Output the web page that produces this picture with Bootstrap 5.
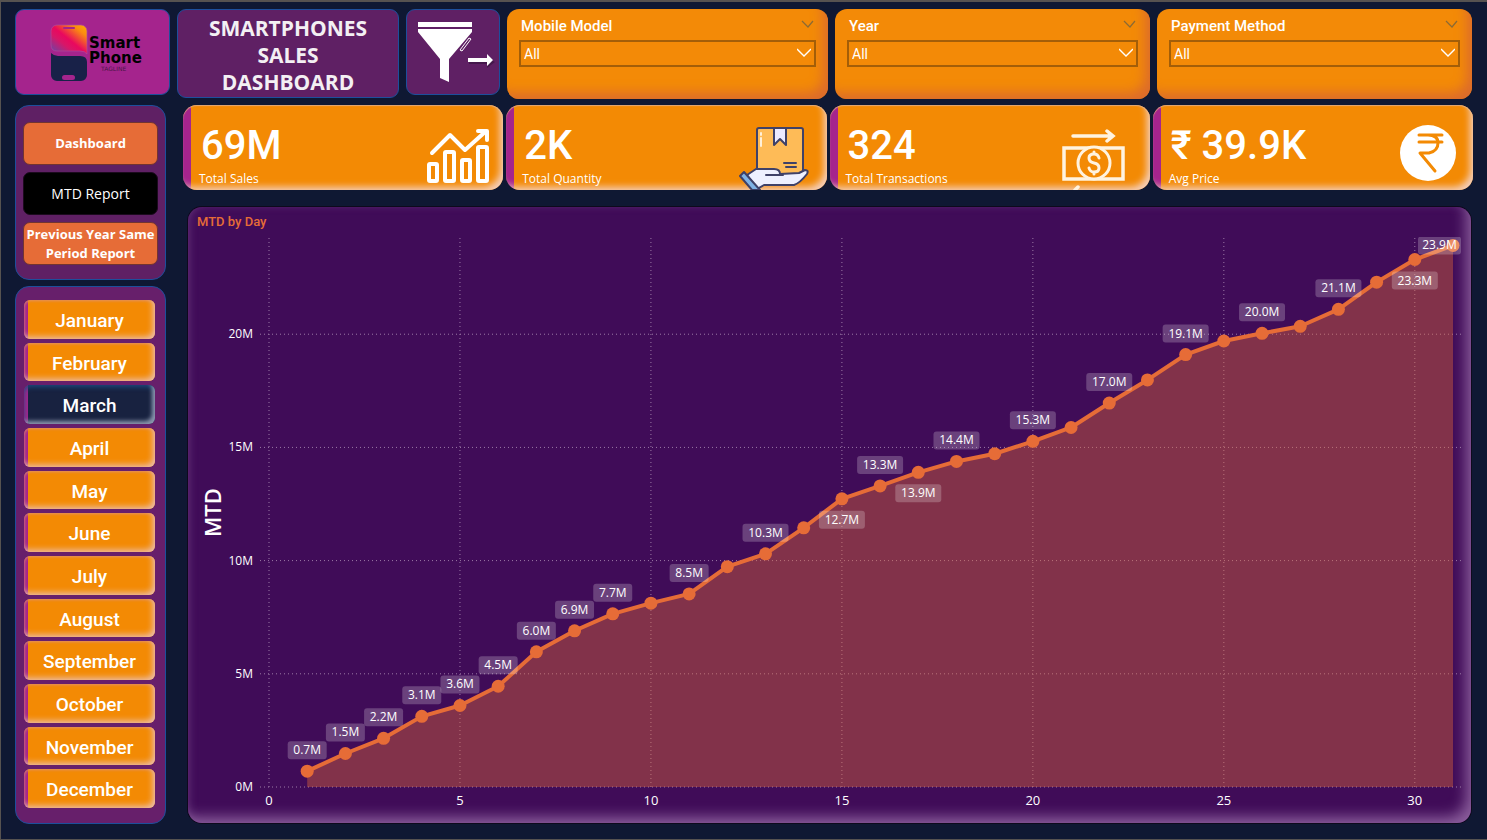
<!DOCTYPE html>
<html lang="en">
<head>
<meta charset="utf-8">
<meta name="viewport" content="width=device-width, initial-scale=1">
<title>Smartphones Sales Dashboard</title>
<link href="https://cdn.jsdelivr.net/npm/bootstrap@5.3.0/dist/css/bootstrap.min.css" rel="stylesheet">
<style>
  :root { --din: Roboto, "Liberation Sans", sans-serif; --segoe: "Open Sans", "Noto Sans", sans-serif; }
  body { background: #0f1833; color: #fff; font-family: var(--segoe); }
  .page { border: 1px solid #565250; border-top-width: 2px; border-right: 0; padding: 7px 14px 15px; }
  .topbar { display: grid; grid-template-columns: 155px 222px 94px 321fr 315fr 315fr; gap: 7px; height: 89px; align-items: start; padding-right: 1px; margin-bottom: 7px; }
  .tile { border: 1px solid #1d4f9c; border-radius: 9px; background: #5f2064; height: 86px; }
  .tile-logo { background: #a5248d; }
  .tile-title { height: 89px; font-size: 21px; line-height: 27px; font-weight: 700; color: #f3f0f3; padding-top: 3px; }
  .slicer { height: 90px; border-radius: 12px; background: #f38a07; box-shadow: inset -9px -10px 12px -4px #dc6b2c; padding: 7px 12px 0 12px; font-family: var(--din); }
  .slicer label { font-size: 15px; line-height: 20px; font-weight: 500; padding-left: 2px; }
  .slicer select { appearance: none; width: 100%; height: 27px; border: 2px solid #a35e08; background: transparent; color: #fff; font-size: 14px; line-height: 20px; padding: 0 4px 0 3px; border-radius: 0; }
  .slicer option { color: #222; }
  .slicer .box-arrow { right: 5px; top: 8px; pointer-events: none; }
  .layout { display: grid; grid-template-columns: 151px minmax(0, 1fr); gap: 17px; }
  .side-panel { border: 1px solid #1d4f9c; border-radius: 14px; background: #5f2064; }
  .side-nav { height: 175px; padding: 16px 7px 14px; gap: 7px; margin-bottom: 6px; }
  .side-nav a { flex: 1 1 0; border: 1px solid #713431; border-radius: 7px; background: #e66c37; color: #fff; font-size: 13px; line-height: 19px; font-weight: 700; text-decoration: none; white-space: nowrap; }
  .side-nav a.current { background: #000; border-color: #1c0a1e; font-size: 14px; font-weight: 400; }
  .months { background: #671f6b; padding: 13px 10px 15px 8px; gap: 4px; }
  .month { flex: 1 1 0; min-height: 32px; border: 0; border-radius: 6px; color: #fff; font: 500 19px/24px var(--din); background: linear-gradient(90deg, #a5248d 4px, #f38a04 4px); box-shadow: inset -3px -3px 6px -1px #ecc0b0, inset 0 1px 3px #e28a55; padding: 3px 0 0; }
  .month.chosen { background: linear-gradient(90deg, #a5248d 4px, #182240 4px); box-shadow: inset -4px -4px 4px -1px #8c96ad, inset 0 2px 5px #1b4b80; }
  .kpis { display: grid; grid-template-columns: repeat(4, minmax(0, 1fr)); gap: 3px; margin-bottom: 17px; }
  .kpi { height: 85px; border-radius: 14px; overflow: hidden; background: linear-gradient(90deg, #a5248d 8px, #f38a04 8px); box-shadow: inset -6px -6px 7px -3px #f5cfbb, inset 0 1px 1px #e0a878; padding: 18px 12px 0 16px; }
  .kpi-value { font: 500 40px/46px var(--din); padding-left: 2px; }
  .kpi-label { font-size: 12px; line-height: 20px; }
  .kpi svg { align-self: flex-end; flex: none; }
  .chart-panel { margin: 0 2px 1px 5px; min-height: 500px; border-radius: 14px; background: #400c58; box-shadow: inset -10px -11px 14px -5px #8a5d9b, inset 3px 0 10px -3px #6b3a80, 0 0 0 1px #0d0a1c; }
  .chart-title { font: 500 13px/30px var(--din); color: #e66c37; margin: 0; padding-left: 9px; }
  #chart { flex: 1 1 0; min-height: 0; width: 100%; display: block; }
  #chart text { fill: #fff; font-size: 12px; }
  #chart .axis-title { font-size: 22px; font-weight: 600; }
  #chart .x-tick { font-size: 13px; }
  .gridline { stroke: #9b7aa6; stroke-dasharray: 1 3; }
</style>
</head>
<body>
<div class="page min-vh-100 d-flex flex-column">
  <header class="topbar">
    <div class="tile tile-logo d-flex align-items-center justify-content-center">
      <svg width="153" height="84" role="img" aria-label="Smart Phone">
        <defs><linearGradient id="sunset" x1="1" y1="0" x2="0" y2="1"><stop offset="0" stop-color="#ffb000"/><stop offset=".2" stop-color="#fb8b10"/><stop offset=".5" stop-color="#e9085e"/><stop offset=".65" stop-color="#d81668"/><stop offset="1" stop-color="#5a4bb0"/></linearGradient></defs>
        <path d="M41 15h24a6 6 0 0 1 6 6v23q-2-3-7-3H41q-6 0-6-6V21a6 6 0 0 1 6-6z" fill="url(#sunset)" stroke="#b04a9c" stroke-width=".7"/>
        <rect x="47" y="17" width="12" height="2" rx="1" fill="#a5248d"/>
        <path d="M35 43q3 3 7 3h22q7 0 7 6v13a6 6 0 0 1-6 6H41a6 6 0 0 1-6-6z" fill="#182148"/>
        <rect x="46" y="65" width="13" height="5" rx="2.5" fill="#a5248d"/>
        <text x="73" y="38" font-family="DejaVu Sans" font-weight="700" font-size="15">Smart</text>
        <text x="73" y="53" font-family="DejaVu Sans" font-weight="700" font-size="15">Phone</text>
        <text x="85" y="61" font-family="DejaVu Sans" font-size="6" fill="#4b1748">TAGLINE</text>
      </svg>
    </div>
    <h1 class="tile tile-title m-0 d-flex align-items-center justify-content-center text-center">SMARTPHONES<br>SALES<br>DASHBOARD</h1>
    <button class="tile p-0" type="button" aria-label="Filters">
      <svg width="92" height="84" fill="#fff">
        <path d="M11 12h54v5H11zM11 19h54v3L42 49v23l-9-4V49L11 22z"/>
        <path d="M62 28l2 1-9 12-2-1z" fill="#5f2064" stroke="#fff"/>
        <path d="M62 51h18v-3l8 4-8 6v-4H62z" fill="#2b1033" opacity=".5"/>
        <path d="M61 48h19v-4l6 6-6 6v-4H61z"/>
      </svg>
    </button>
    <div class="slicer">
      <div class="d-flex justify-content-between"><label for="model">Mobile Model</label><svg width="16" height="16" fill="none" stroke="#8a6a35" stroke-width="1.2"><path d="M2 5l6 6 5-6"/></svg></div>
      <div class="position-relative mt-1"><select id="model"><option>All</option></select><svg class="box-arrow position-absolute" width="14" height="10" fill="none" stroke="#fff" stroke-width="1.4"><path d="M0 1l7 7 7-7"/></svg></div>
    </div>
    <div class="slicer">
      <div class="d-flex justify-content-between"><label for="year">Year</label><svg width="16" height="16" fill="none" stroke="#8a6a35" stroke-width="1.2"><path d="M2 5l6 6 5-6"/></svg></div>
      <div class="position-relative mt-1"><select id="year"><option>All</option></select><svg class="box-arrow position-absolute" width="14" height="10" fill="none" stroke="#fff" stroke-width="1.4"><path d="M0 1l7 7 7-7"/></svg></div>
    </div>
    <div class="slicer">
      <div class="d-flex justify-content-between"><label for="payment">Payment Method</label><svg width="16" height="16" fill="none" stroke="#8a6a35" stroke-width="1.2"><path d="M2 5l6 6 5-6"/></svg></div>
      <div class="position-relative mt-1"><select id="payment"><option>All</option></select><svg class="box-arrow position-absolute" width="14" height="10" fill="none" stroke="#fff" stroke-width="1.4"><path d="M0 1l7 7 7-7"/></svg></div>
    </div>
  </header>

  <div class="layout flex-grow-1">
    <aside class="d-flex flex-column">
      <nav class="side-panel side-nav d-flex flex-column">
        <a href="#" class="d-flex align-items-center justify-content-center text-center">Dashboard</a>
        <a href="#" class="current d-flex align-items-center justify-content-center text-center">MTD Report</a>
        <a href="#" class="d-flex align-items-center justify-content-center text-center">Previous Year Same<br>Period Report</a>
      </nav>
      <div class="side-panel months d-flex flex-column flex-grow-1">
        <button type="button" class="month">January</button>
        <button type="button" class="month">February</button>
        <button type="button" class="month chosen">March</button>
        <button type="button" class="month">April</button>
        <button type="button" class="month">May</button>
        <button type="button" class="month">June</button>
        <button type="button" class="month">July</button>
        <button type="button" class="month">August</button>
        <button type="button" class="month">September</button>
        <button type="button" class="month">October</button>
        <button type="button" class="month">November</button>
        <button type="button" class="month">December</button>
      </div>
    </aside>

    <main class="d-flex flex-column">
      <section class="kpis">
        <div class="kpi d-flex justify-content-between">
          <div><div class="kpi-value">69M</div><div class="kpi-label">Total Sales</div></div>
          <svg width="80" height="68" fill="none" stroke="#fff" stroke-width="4" stroke-linecap="round" stroke-linejoin="round">
            <rect x="18" y="42" width="8" height="17" rx="1"/><rect x="34" y="30" width="9" height="29" rx="1"/><rect x="51" y="38" width="8" height="21" rx="1"/><rect x="67" y="25" width="9" height="34" rx="1"/>
            <path d="M21 31l18-18 15 15 20-18M67 9h9v9"/>
          </svg>
        </div>
        <div class="kpi d-flex justify-content-between">
          <div><div class="kpi-value">2K</div><div class="kpi-label">Total Quantity</div></div>
          <svg width="80" height="68" stroke="#3f4168" stroke-width="2" stroke-linejoin="round" stroke-linecap="round">
            <rect x="22" y="6" width="46" height="46" rx="2" fill="#febb57"/>
            <path d="M39 6v17l6-6 6 6V6z" fill="#eceaff"/>
            <path d="M26 11v2M26 16v8" stroke="#fff0d8"/>
            <path d="M49 41h12M51 45h10"/>
            <path d="M12 53l9-6h18q6 0 6 5l19-1 6-3q4 0 2 4-7 9-13 11H29l-7 4z" fill="#eef0ff"/>
            <path d="M31 53h17"/>
            <path d="M5 54l4-4 16 18H17z" fill="#7fb2e5"/>
          </svg>
        </div>
        <div class="kpi d-flex justify-content-between">
          <div><div class="kpi-value">324</div><div class="kpi-label">Total Transactions</div></div>
          <svg width="80" height="68" fill="none" stroke="#fff3e0" stroke-width="4" stroke-linecap="round">
            <path d="M15 14h37M49 9l6 5-6 5M17 68l3-3" stroke-width="3.5"/>
            <rect x="6" y="26" width="59" height="31" stroke-width="3.5"/>
            <circle cx="36" cy="41" r="16" fill="#f38a04" stroke-width="3"/>
            <path d="M41 36q-1-4-5-4-5 0-5 4t5 5 5 5-5 4q-4 0-5-4M36 31v-1M36 51v1" stroke-width="3"/>
          </svg>
        </div>
        <div class="kpi d-flex justify-content-between">
          <div><div class="kpi-value">₹ 39.9K</div><div class="kpi-label">Avg Price</div></div>
          <svg width="80" height="68" fill="none" stroke="#f38a04" stroke-width="3" stroke-linecap="round" stroke-linejoin="round">
            <circle cx="47" cy="31" r="28" fill="#fff" stroke="none"/>
            <path d="M38 13h23M38 20h23M38 13h9q10 0 10 8t-9 10h-9l15 18"/>
          </svg>
        </div>
      </section>
      <section class="chart-panel d-flex flex-column flex-grow-1">
        <h2 class="chart-title">MTD by Day</h2>
        <svg id="chart" role="img" aria-label="MTD by Day"></svg>
      </section>
    </main>
  </div>
</div>
<script src="https://cdn.jsdelivr.net/npm/bootstrap@5.3.0/dist/js/bootstrap.bundle.min.js"></script>
<script>
  // Running total in millions for each day, with the data label and the side it stands on
  const days = [
    [0.7, '0.7M'], [1.48, '1.5M'], [2.15, '2.2M'], [3.12, '3.1M'], [3.6, '3.6M'], [4.45, '4.5M'], [5.97, '6.0M'], [6.9, '6.9M'],
    [7.65, '7.7M'], [8.12], [8.53, '8.5M'], [9.73], [10.3, '10.3M'], [11.45], [12.73, '12.7M', 1], [13.3, '13.3M'],
    [13.9, '13.9M', 1], [14.38, '14.4M'], [14.72], [15.27, '15.3M'], [15.88], [16.96, '17.0M'], [17.98], [19.1, '19.1M'],
    [19.7], [20.04, '20.0M'], [20.35], [21.1, '21.1M'], [22.3], [23.3, '23.3M', 1], [23.92, '23.9M']
  ];
  const svg = document.getElementById('chart');
  function draw() {
    const w = svg.clientWidth, h = svg.clientHeight;
    const left = 81, bottom = h - 36, top = 1;
    const px = d => left + d * (w - left - 18) / 31;
    const py = v => bottom - v * (bottom - top) / 24.25;
    let out = '';
    for (let d = 0; d <= 30; d += 5) {
      out += `<line class="gridline" x1="${px(d)}" x2="${px(d)}" y1="${top}" y2="${bottom}"/>`;
      out += `<text class="x-tick" x="${px(d)}" y="${bottom + 18}" text-anchor="middle">${d}</text>`;
    }
    for (let v = 0; v <= 20; v += 5) {
      out += `<line class="gridline" x1="${left - 9}" x2="${w - 10}" y1="${py(v)}" y2="${py(v)}"/>`;
      out += `<text x="${left - 16}" y="${py(v) + 4}" text-anchor="end">${v}M</text>`;
    }
    const pts = days.map((p, i) => [px(i + 1), py(p[0])]);
    const line = pts.map(p => p.join(',')).join(' ');
    out += `<polygon points="${px(1)},${bottom} ${line} ${px(31)},${bottom}" fill="#e66c37" fill-opacity=".4"/>`;
    out += `<polyline points="${line}" fill="none" stroke="#e66c37" stroke-width="4" stroke-linejoin="round"/>`;
    pts.forEach(p => out += `<circle cx="${p[0]}" cy="${p[1]}" r="6.5" fill="#e66c37"/>`);
    days.forEach((p, i) => {
      if (!p[1]) return;
      const last = i === days.length - 1;
      const bw = last ? 43 : p[1].length > 4 ? 46 : 39;
      const x = last ? w - 10 - bw / 2 : pts[i][0];
      const y = last ? pts[i][1] : pts[i][1] + (p[2] ? 21 : -21);
      out += `<rect x="${x - bw / 2}" y="${y - 9}" width="${bw}" height="18" rx="3" fill="#fff" fill-opacity=".22"/>`;
      out += `<text x="${x}" y="${y + 4}" text-anchor="middle">${p[1]}</text>`;
    });
    out += `<text class="axis-title" transform="translate(33 ${(top + bottom) / 2}) rotate(-90)" text-anchor="middle">MTD</text>`;
    svg.innerHTML = out;
  }
  draw();
  new ResizeObserver(draw).observe(svg);
</script>
</body>
</html>
